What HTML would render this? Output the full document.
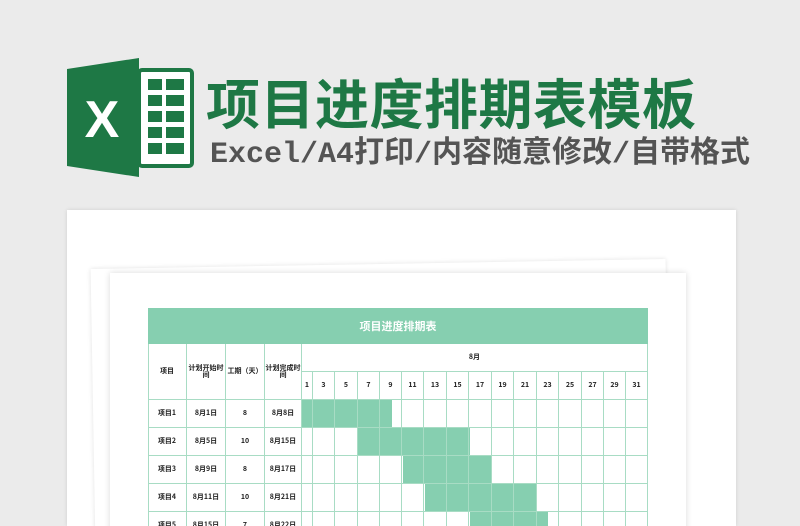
<!DOCTYPE html>
<html><head><meta charset="utf-8"><style>
*{margin:0;padding:0;box-sizing:border-box}
html{width:800px;height:526px;overflow:hidden}
body{width:800px;height:526px;background:#ebebeb;position:relative;overflow:hidden;font-family:"Liberation Sans","Noto Sans CJK SC",sans-serif}
.t1{position:absolute;left:206px;top:70px;font:bold 54px/62px "Noto Sans CJK SC",sans-serif;color:#1e7845;white-space:nowrap;letter-spacing:0.5px}
.t2{position:absolute;left:210px;top:136px;font:30px/38px "Liberation Mono","Noto Sans CJK SC",monospace;color:#545454;white-space:nowrap;font-weight:bold}
.p{position:absolute;background:#fff}
.cell{position:absolute;border-right:1px solid #a8dcc4;border-bottom:1px solid #a8dcc4;font:bold 7px/1 "Noto Sans CJK SC",sans-serif;color:#222;display:flex;align-items:center;justify-content:center;text-align:center}
.f{position:absolute;background:#86cfb0}
</style></head><body>
<svg style="position:absolute;left:60px;top:55px" width="140" height="125" viewBox="0 0 140 125">
<rect x="79" y="15" width="53" height="96" rx="3" fill="#fff" stroke="#1e7845" stroke-width="4"/>
<g fill="#1e7845">
<rect x="88" y="24" width="14" height="11"/><rect x="106" y="24" width="18" height="11"/>
<rect x="88" y="40" width="14" height="11"/><rect x="106" y="40" width="18" height="11"/>
<rect x="88" y="56" width="14" height="11"/><rect x="106" y="56" width="18" height="11"/>
<rect x="88" y="72" width="14" height="11"/><rect x="106" y="72" width="18" height="11"/>
<rect x="88" y="88" width="14" height="11"/><rect x="106" y="88" width="18" height="11"/>
</g>
<polygon points="7,14 79,3 79,122 7,111" fill="#1e7845"/>
<text x="42" y="82" text-anchor="middle" font-family="Liberation Sans" font-weight="bold" font-size="52" fill="#fff">X</text>
</svg>
<div class="t1">项目进度排期表模板</div>
<div class="t2">Excel/A4打印/内容随意修改/自带格式</div>

<div class="p" style="left:67px;top:210px;width:669px;height:316px;box-shadow:0 0 4px rgba(0,0,0,.12)"></div>
<div class="p" style="left:93px;top:264px;width:575px;height:280px;box-shadow:0 0 5px rgba(0,0,0,.12);transform:rotate(-1deg)"></div>
<div class="p" style="left:110px;top:273px;width:576px;height:260px;box-shadow:0 0 6px rgba(0,0,0,.15)"></div>

<div style="position:absolute;left:148px;top:308px;width:500px;height:36px;background:#86cfb0;color:#fff;font:bold 11px/36px 'Noto Sans CJK SC',sans-serif;text-align:center">项目进度排期表</div>
<div style="position:absolute;left:148px;top:344px;width:1px;height:190px;background:#a8dcc4"></div>
<div id="g"></div>
<script>
var g=document.getElementById('g'),h='';
function c(x,y,w,hh,t){h+='<div class="cell" style="left:'+x+'px;top:'+y+'px;width:'+w+'px;height:'+hh+'px">'+t+'</div>';}
var fills=[[302,392,400],[358,470,428],[403,492,456],[425,537,484],[470,548,512]];
fills.forEach(function(f){h+='<div class="f" style="left:'+f[0]+'px;top:'+f[2]+'px;width:'+(f[1]-f[0])+'px;height:28px"></div>';});
var cx=[148,187,226,265,302];
var hd=['项目','计划开始时<br>间','工期（天）','计划完成时<br>间'];
for(var i=0;i<4;i++)c(cx[i],344,cx[i+1]-cx[i],56,hd[i]);
c(302,344,346,28,'8月');
var dx=[302,313,335,358,380,402,424,447,469,492,514,537,559,582,604,626,648];
var days=[1,3,5,7,9,11,13,15,17,19,21,23,25,27,29,31];
for(var j=0;j<16;j++)c(dx[j],372,dx[j+1]-dx[j],28,days[j]);
var rows=[['项目1','8月1日','8','8月8日'],['项目2','8月5日','10','8月15日'],['项目3','8月9日','8','8月17日'],['项目4','8月11日','10','8月21日'],['项目5','8月15日','7','8月22日']];
rows.forEach(function(r,k){var y=400+k*28;
for(var i=0;i<4;i++)c(cx[i],y,cx[i+1]-cx[i],28,r[i]);
for(var j=0;j<16;j++)c(dx[j],y,dx[j+1]-dx[j],28,'');});
g.innerHTML=h;
</script>
</body></html>
